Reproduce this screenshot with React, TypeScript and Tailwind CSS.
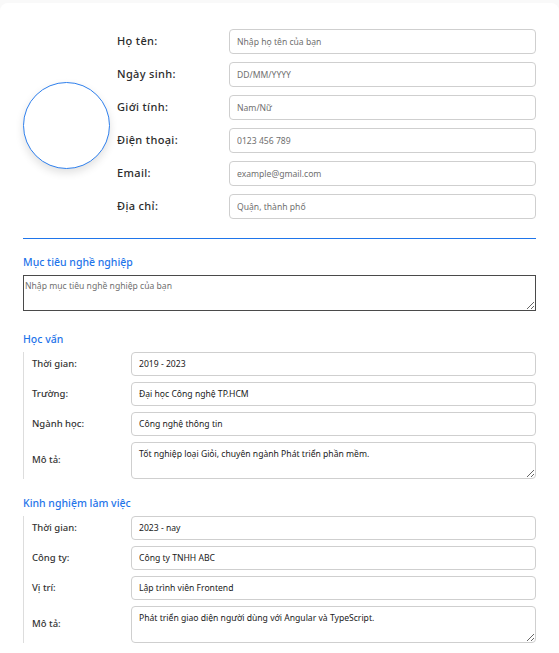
import React from "react";

const font = { fontFamily: '"Noto Sans", "Open Sans", sans-serif' };

function TopRow({ label, placeholder }: { label: string; placeholder: string }) {
  return (
    <div className="grid grid-cols-[112px_1fr] items-center">
      <label className="text-[11px] font-medium tracking-[0.35px] text-[#2b2b2b]">{label}</label>
      <input
        placeholder={placeholder}
        className="h-[25px] w-full rounded-[4px] border border-[#cfcfcf] px-[7px] text-[8.6px] text-[#222] placeholder:text-[#6f6f6f] outline-none"
      />
    </div>
  );
}

function SecRow({ label, value, area }: { label: string; value: string; area?: boolean }) {
  return (
    <div className="grid grid-cols-[99px_1fr] items-center">
      <label className="text-[9.5px] font-medium text-[#333]">{label}</label>
      {area ? (
        <textarea
          defaultValue={value}
          className="block h-[37px] w-full resize-y rounded-[4px] border border-[#cfcfcf] px-[7px] pt-[4px] text-[8.6px] leading-[14px] text-[#1a1a1a] outline-none"
        />
      ) : (
        <input
          defaultValue={value}
          className="h-[24px] w-full rounded-[4px] border border-[#cfcfcf] px-[7px] text-[8.6px] text-[#1a1a1a] outline-none"
        />
      )}
    </div>
  );
}

function Heading({ children }: { children: React.ReactNode }) {
  return <h3 className="text-[10.5px] font-medium leading-[16px] text-[#1f75ea]">{children}</h3>;
}

export default function App() {
  return (
    <div className="min-h-screen bg-[#f9f9f9] pt-[3px]" style={font}>
      <div className="rounded-lg bg-white px-[23px] pt-[26px] pb-[20px]">
        <div className="flex items-center gap-[7px]">
          <div className="mt-[3px] h-[87px] w-[87px] shrink-0 rounded-full border border-[#2f80ed] bg-white shadow-[0_4px_8px_rgba(0,0,0,0.12)]" />
          <div className="flex flex-1 flex-col gap-[8px]">
            <TopRow label="Họ tên:" placeholder="Nhập họ tên của bạn" />
            <TopRow label="Ngày sinh:" placeholder="DD/MM/YYYY" />
            <TopRow label="Giới tính:" placeholder="Nam/Nữ" />
            <TopRow label="Điện thoại:" placeholder="0123 456 789" />
            <TopRow label="Email:" placeholder="example@gmail.com" />
            <TopRow label="Địa chỉ:" placeholder="Quận, thành phố" />
          </div>
        </div>

        <div className="mt-[19px] h-px bg-[#1f75ea]" />

        <div className="mt-[15px]">
          <Heading>Mục tiêu nghề nghiệp</Heading>
          <textarea
            placeholder="Nhập mục tiêu nghề nghiệp của bạn"
            className="mt-[5px] block h-[36px] w-full border border-[#4a4a4a] px-[1px] py-[3px] text-[8.6px] leading-[14px] placeholder:text-[#6f6f6f] outline-none"
          />
        </div>

        <div className="mt-[20px]">
          <Heading>Học vấn</Heading>
          <div className="mt-[5px] flex flex-col gap-[6px] border-l border-[#ddd] pl-[8px]">
            <SecRow label="Thời gian:" value="2019 - 2023" />
            <SecRow label="Trường:" value="Đại học Công nghệ TP.HCM" />
            <SecRow label="Ngành học:" value="Công nghệ thông tin" />
            <SecRow label="Mô tả:" value="Tốt nghiệp loại Giỏi, chuyên ngành Phát triển phần mềm." area />
          </div>
        </div>

        <div className="mt-[16px]">
          <Heading>Kinh nghiệm làm việc</Heading>
          <div className="mt-[5px] flex flex-col gap-[6px] border-l border-[#ddd] pl-[8px]">
            <SecRow label="Thời gian:" value="2023 - nay" />
            <SecRow label="Công ty:" value="Công ty TNHH ABC" />
            <SecRow label="Vị trí:" value="Lập trình viên Frontend" />
            <SecRow label="Mô tả:" value="Phát triển giao diện người dùng với Angular và TypeScript." area />
          </div>
        </div>
      </div>
    </div>
  );
}
